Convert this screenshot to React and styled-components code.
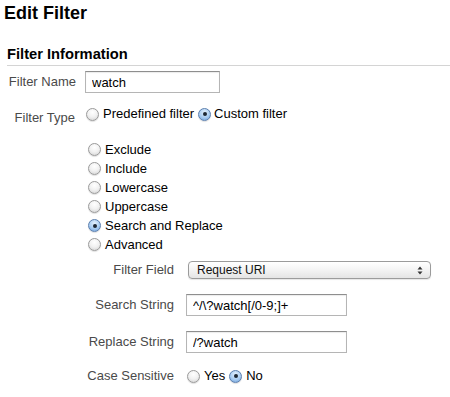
import React from 'react';
import styled, { createGlobalStyle } from 'styled-components';

const GlobalStyle = createGlobalStyle`
  body {
    margin: 0;
    background: #fff;
    font-family: "Liberation Sans", Arial, Helvetica, sans-serif;
    font-size: 13px;
    color: #000;
  }
`;

const Page = styled.div`
  width: 450px;
  height: 397px;
  padding-top: 2px;
  box-sizing: border-box;
  overflow: hidden;
`;

const Title = styled.h1`
  margin: 0 0 0 4px;
  font-size: 18px;
  line-height: 22px;
  font-weight: bold;
`;

const SectionTitle = styled.h2`
  margin: 21px 0 0 7px;
  padding-bottom: 2px;
  font-size: 14.7px;
  line-height: 18px;
  font-weight: bold;
  border-bottom: 1px solid #d4d4d4;
`;

const Row = styled.div`
  display: flex;
  align-items: ${(p) => (p.$top ? 'flex-start' : 'center')};
  margin-top: ${(p) => p.$mt || 0}px;
`;

const Label = styled.div`
  width: ${(p) => p.$w}px;
  flex: none;
  text-align: right;
  color: #4a4a4a;
  line-height: 16px;
  padding-top: ${(p) => p.$pt || 0}px;
  margin-right: ${(p) => p.$gap}px;
`;

const TextInput = styled.input`
  width: ${(p) => p.$w}px;
  height: 22px;
  box-sizing: border-box;
  margin: 0;
  padding: 0 6px;
  border: 1px solid #b5b5b5;
  border-top-color: #8e8e8e;
  box-shadow: inset 0 1px 1px rgba(0, 0, 0, 0.08);
  font-family: "Liberation Sans", Arial, sans-serif;
  font-size: 13px;
  color: #000;
  background: #fff;
  outline: none;
`;

const Options = styled.div`
  display: flex;
  align-items: center;
`;

const Option = styled.label`
  display: flex;
  align-items: center;
  line-height: ${(p) => p.$lh || 16}px;
  margin-right: ${(p) => p.$mr || 0}px;
`;

const Radio = styled.span`
  position: relative;
  width: 13px;
  height: 13px;
  box-sizing: border-box;
  flex: none;
  border-radius: 50%;
  margin-right: ${(p) => p.$mr || 4}px;
  border: 1px solid ${(p) => (p.$on ? '#5b7fae' : '#9a9a9a')};
  background: ${(p) =>
    p.$on
      ? 'radial-gradient(circle at 50% 30%, #e3f0fc 0%, #a9cdf2 55%, #6f9fd8 100%)'
      : 'radial-gradient(circle at 50% 30%, #ffffff 0%, #f1f1f1 50%, #cfcfcf 100%)'};
  box-shadow: 0 1px 1px rgba(0, 0, 0, 0.12);

  &::after {
    content: '';
    display: ${(p) => (p.$on ? 'block' : 'none')};
    position: absolute;
    left: 50%;
    top: 50%;
    width: 4px;
    height: 4px;
    margin: -2px 0 0 -2px;
    border-radius: 50%;
    background: #1d2733;
  }
`;

const SubList = styled.div`
  display: flex;
  flex-direction: column;
  margin: 14px 0 0 88px;
`;

const Fields = styled.div`
  display: flex;
  flex-direction: column;
  gap: 15px;
  margin-top: 7px;
`;

const Select = styled.div`
  width: 243px;
  height: 18px;
  margin-left: 2px;
  box-sizing: border-box;
  display: flex;
  align-items: center;
  justify-content: space-between;
  padding: 0 7px 0 8px;
  border: 1px solid #9b9b9b;
  border-radius: 4px;
  background: linear-gradient(#ffffff, #f3f3f3 50%, #e4e4e4);
  box-shadow: 0 1px 1px rgba(0, 0, 0, 0.1);
  font-size: 12px;
  color: #111;
`;

const Arrows = () => (
  <svg width="6" height="9" viewBox="0 0 6 9">
    <path d="M3 0.5 L5.5 3.5 H0.5 Z M3 8.5 L5.5 5.5 H0.5 Z" fill="#333" />
  </svg>
);

const subTypes = [
  { name: 'Exclude' },
  { name: 'Include' },
  { name: 'Lowercase' },
  { name: 'Uppercase' },
  { name: 'Search and Replace', on: true },
  { name: 'Advanced' },
];

export default function App() {
  return (
    <Page>
      <GlobalStyle />
      <Title>Edit Filter</Title>
      <SectionTitle>Filter Information</SectionTitle>

      <Row $mt={5}>
        <Label $w={76} $gap={9}>Filter Name</Label>
        <TextInput $w={135} defaultValue="watch" />
      </Row>

      <Row $top $mt={13}>
        <Label $w={75} $gap={11} $pt={4}>Filter Type</Label>
        <Options>
          <Option $mr={4}>
            <Radio />
            Predefined filter
          </Option>
          <Option>
            <Radio $on $mr={3} />
            Custom filter
          </Option>
        </Options>
      </Row>

      <SubList>
        {subTypes.map((t) => (
          <Option key={t.name} $lh={19}>
            <Radio $on={t.on} />
            {t.name}
          </Option>
        ))}
      </SubList>

      <Fields>
        <Row>
          <Label $w={174} $gap={12}>Filter Field</Label>
          <Select>
            <span>Request URI</span>
            <Arrows />
          </Select>
        </Row>
        <Row>
          <Label $w={174} $gap={12}>Search String</Label>
          <TextInput $w={161} defaultValue="^/\?watch[/0-9;]+" />
        </Row>
        <Row>
          <Label $w={174} $gap={12}>Replace String</Label>
          <TextInput $w={161} defaultValue="/?watch" />
        </Row>
        <Row>
          <Label $w={174} $gap={13}>Case Sensitive</Label>
          <Options>
            <Option $mr={4}>
              <Radio />
              Yes
            </Option>
            <Option>
              <Radio $on />
              No
            </Option>
          </Options>
        </Row>
      </Fields>
    </Page>
  );
}
